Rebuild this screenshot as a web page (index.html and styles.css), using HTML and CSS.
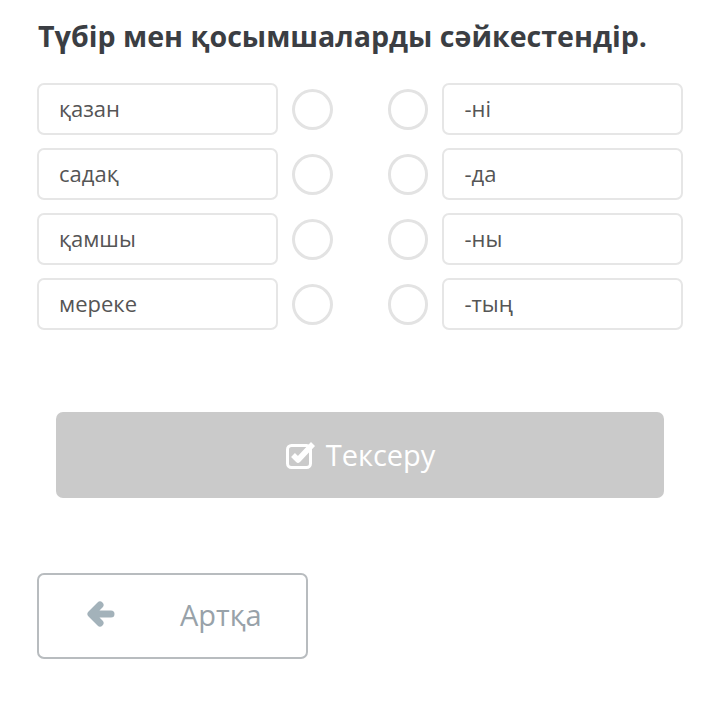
FILE: index.html
```html
<!DOCTYPE html>
<html lang="kk">
<head>
  <meta charset="UTF-8">
  <title>Сәйкестендір</title>
  <link rel="stylesheet" href="styles.css">
</head>
<body>
  <h1 class="title">Түбір мен қосымшаларды сәйкестендір.</h1>

  <div class="board">
    <div class="row">
      <div class="word">қазан</div>
      <span class="dot"></span>
      <span class="dot"></span>
      <div class="word">-ні</div>
    </div>
    <div class="row">
      <div class="word">садақ</div>
      <span class="dot"></span>
      <span class="dot"></span>
      <div class="word">-да</div>
    </div>
    <div class="row">
      <div class="word">қамшы</div>
      <span class="dot"></span>
      <span class="dot"></span>
      <div class="word">-ны</div>
    </div>
    <div class="row">
      <div class="word">мереке</div>
      <span class="dot"></span>
      <span class="dot"></span>
      <div class="word">-тың</div>
    </div>
  </div>

  <button class="check">
    <svg width="33" height="30" viewBox="0 0 33 30">
      <rect x="2.5" y="5.5" width="23" height="22" rx="4" fill="none" stroke="#fff" stroke-width="3"/>
      <path d="M8 15 l5 5 l15 -16" fill="none" stroke="#fff" stroke-width="5.5" stroke-linejoin="round"/>
    </svg>
    Тексеру
  </button>

  <button class="back">
    <svg width="30" height="28" viewBox="0 0 30 28">
      <path d="M14 5 L5 14 L14 23 M6 14 H25" fill="none" stroke="#a3b2ba" stroke-width="7" stroke-linecap="round" stroke-linejoin="round"/>
    </svg>
    <span>Артқа</span>
  </button>
</body>
</html>
```

FILE: styles.css
```css
body {
  margin: 0;
  padding: 16px 37px 0 37px;
  font-family: "Open Sans", "Noto Sans", sans-serif;
  background: #fff;
}
.title {
  margin: 0 0 0 1px;
  font-size: 28.6px;
  font-weight: 700;
  color: #3b3e43;
  line-height: 40px;
}
.board {
  margin-top: 27px;
  display: flex;
  flex-direction: column;
  gap: 13px;
}
.row {
  display: flex;
  align-items: center;
  height: 52px;
}
.word {
  box-sizing: border-box;
  width: 241px;
  height: 52px;
  border: 2px solid #e6e6e6;
  border-radius: 7px;
  padding-left: 20px;
  display: flex;
  align-items: center;
  font-size: 22px;
  color: #555;
  padding-bottom: 3px;
}
.dot {
  box-sizing: border-box;
  width: 41px;
  height: 41px;
  border: 3px solid #e3e3e3;
  border-radius: 50%;
  margin-left: 14px;
}
.dot + .dot {
  margin-left: 55px;
  margin-right: 14px;
}
.check {
  display: flex;
  align-items: center;
  justify-content: center;
  gap: 8px;
  width: 608px;
  height: 86px;
  margin: 82px 0 0 19px;
  border: none;
  border-radius: 7px;
  background: #cacaca;
  color: #fff;
  font-family: inherit;
  font-size: 29px;
  padding-bottom: 2px;
}
.back {
  display: flex;
  align-items: center;
  width: 271px;
  height: 86px;
  margin-top: 75px;
  padding: 0 0 4px 47px;
  box-sizing: border-box;
  background: #fff;
  border: 2px solid #b8bcbf;
  border-radius: 7px;
  font-family: inherit;
  font-size: 29px;
  color: #98a2a9;
}
.back span {
  margin-left: 64px;
}
```
